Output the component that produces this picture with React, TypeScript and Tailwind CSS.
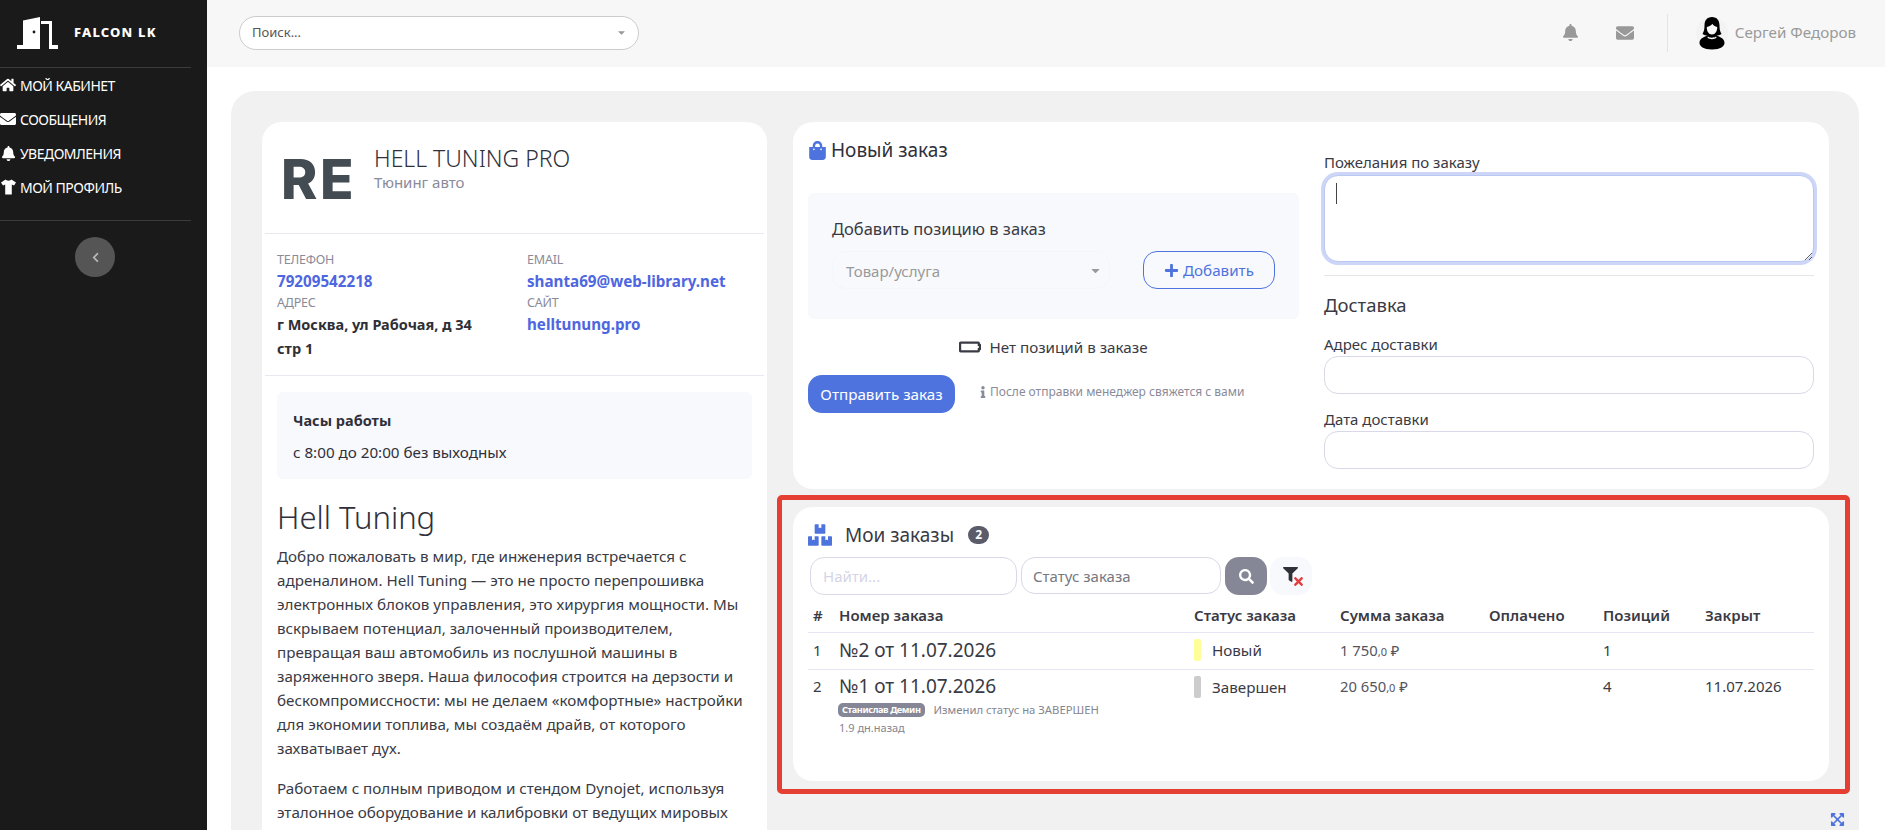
import React from "react";
import { FaHome, FaEnvelope, FaBell, FaChevronLeft, FaShoppingBag, FaPlus, FaInfo, FaSearch, FaBoxes, FaExpandArrowsAlt, FaFilter, FaTimes, FaBatteryEmpty, FaCaretDown } from "react-icons/fa";

function Logo() {
  return (
    <svg width="41" height="32" viewBox="0 0 41 32" className="ml-[17px] shrink-0">
      <path d="M6 3.5L23 0V32H0V28H6Z" fill="#fff" />
      <path d="M24 4H35V28H41V32H32V7H24Z" fill="#fff" />
      <circle cx="17" cy="15" r="1.4" fill="#1a1a1a" />
    </svg>
  );
}

function Shirt() {
  return (
    <svg width="15" height="16" viewBox="0 0 15 16" fill="#fff">
      <path d="M4.600 0.500L0 3.500L2 6.500L4.200 5.400V15.500H10.800V5.400L13 6.500L15 3.500L10.400 0.500C9.800 2 5.200 2 4.600 0.500Z" />
    </svg>
  );
}

function Avatar() {
  return (
    <svg width="32" height="34" viewBox="0 0 32 34" className="shrink-0">
      <circle cx="16" cy="17" r="16" fill="#f3f3f3" />
      <path d="M16 1c-5 0-7.500 3.500-7.500 8.500 0 3.500-.5 6-2 8.500 2 1 3.500 1.500 5 1.500-3 1.500-8 2.500-8 7.500 0 3 4 6.500 12.500 6.500s12.500-3.500 12.500-6.500c0-5-5-6-8-7.500 1.500 0 3-.5 5-1.500-1.500-2.500-2-5-2-8.500C23.500 4.500 21 1 16 1Z" fill="#000" />
      <path d="M10.800 11c2.500-.5 4.500-1.500 5.500-3.200 1 1.700 2.700 2.800 4.900 3.200.2 4-2 7.500-5.200 7.500s-5.500-3.500-5.200-7.500Z" fill="#f7f7f7" />
      <path d="M12 20.500c1.500 1.600 6.500 1.600 8 0l.6 1c-2 2.200-7.200 2.200-9.200 0Z" fill="#f7f7f7" />
    </svg>
  );
}

const navItems = [
  { icon: <FaHome size={16} />, label: "Мой кабинет" },
  { icon: <FaEnvelope size={16} />, label: "Сообщения" },
  { icon: <FaBell size={15} />, label: "Уведомления" },
  { icon: <Shirt />, label: "Мой профиль" },
];

function Sidebar() {
  return (
    <aside className="w-[207px] shrink-0 bg-[#1a1a1a] text-white">
      <div className="w-[191px]">
        <div className="flex h-[68px] items-center border-b border-[#3b3b3b] pb-[2px]">
          <Logo />
          <span className="ml-[16px] text-[13px] font-extrabold tracking-[1.2px]">FALCON LK</span>
        </div>
        <nav className="flex flex-col border-b border-[#3b3b3b] pb-[16px]">
          {navItems.map((n) => (
            <a key={n.label} className="flex h-[34px] items-center gap-[4px] text-[14px] uppercase tracking-[-0.5px]">
              <span className="flex w-[16px] justify-center">{n.icon}</span>
              {n.label}
            </a>
          ))}
        </nav>
        <button className="ml-[75px] mt-[16px] flex h-[40px] w-[40px] items-center justify-center rounded-full bg-[#555555] text-[#b8b8b8]">
          <FaChevronLeft size={11} />
        </button>
      </div>
    </aside>
  );
}

function Header() {
  return (
    <header className="flex h-[67px] shrink-0 items-center bg-[#f7f7f7] pb-[2px] pl-[32px]">
      <div className="flex h-[34px] w-[400px] items-center justify-between rounded-[17px] border border-[#cccccc] bg-white pl-[12px] pr-[11px] text-[13px] text-[#555555]">
        <span>Поиск...</span>
        <FaCaretDown size={11} className="text-[#999999]" />
      </div>
      <div className="ml-auto flex items-center pr-[29px] text-[#999999]">
        <FaBell size={17} />
        <FaEnvelope size={18} className="ml-[37px]" />
        <div className="ml-[33px] mr-[28px] h-[38px] w-px bg-[#e4e4e4]" />
        <Avatar />
        <span className="ml-[7px] text-[15.200px] text-[#9a9a9a]">Сергей Федоров</span>
      </div>
    </header>
  );
}

function Contact({ label, value, link }: { label: string; value: React.ReactNode; link?: boolean }) {
  return (
    <div>
      <div className="h-[19px] text-[12.500px] uppercase leading-[20px] tracking-[-0.2px] text-[#8a8a99]">{label}</div>
      <div className={`font-bold leading-[24px] ${link ? "text-[15.200px] text-[#4e66df]" : "text-[14.500px] text-[#2f2f36]"}`}>{value}</div>
    </div>
  );
}

function LeftCard() {
  return (
    <section className="h-[720px] w-[505px] shrink-0 overflow-hidden rounded-t-[20px] bg-white px-[3px] pt-[21px]">
      <div className="flex h-[90px] items-start pl-[16px]">
        <div className="mt-[6px] w-[93px] text-[55px] font-extrabold leading-[60px] tracking-[2.500px] text-[#434c52]" style={{ fontFamily: "Inter, sans-serif" }}>RE</div>
        <div>
          <div className="text-[23px] font-light leading-[30px] text-[#30303a]">HELL TUNING PRO</div>
          <div className="text-[15px] leading-[19px] text-[#8a8a99]">Тюнинг авто</div>
        </div>
      </div>
      <div className="border-y border-[#e8e8f2] px-[12px] pb-[15px] pt-[16px]">
        <div className="grid grid-cols-[250px_1fr]">
          <Contact label="Телефон" value="79209542218" link />
          <Contact label="Email" value="shanta69@web-library.net" link />
          <div className="w-[215px]"><Contact label="Адрес" value="г Москва, ул Рабочая, д 34 стр 1" /></div>
          <Contact label="Сайт" value="helltunung.pro" link />
        </div>
      </div>
      <div className="px-[12px]">
        <div className="mt-[16px] h-[87px] rounded-[6px] bg-[#f8f9fc] px-[16px] pt-[16px] text-[#30303a]">
          <div className="text-[14.500px] font-bold leading-[24px]">Часы работы</div>
          <div className="mt-[8px] text-[15.200px] leading-[24px]">с 8:00 до 20:00 без выходных</div>
        </div>
        <h1 className="mt-[18px] text-[31px] font-light leading-[40px] text-[#30303a]">Hell Tuning</h1>
        <p className="mt-[7px] text-[15.200px] leading-[24px] text-[#3a3a44]">
          Добро пожаловать в мир, где инженерия встречается с адреналином. Hell Tuning — это не просто перепрошивка электронных блоков управления, это хирургия мощности. Мы вскрываем потенциал, залоченный производителем, превращая ваш автомобиль из послушной машины в заряженного зверя. Наша философия строится на дерзости и бескомпромиссности: мы не делаем «комфортные» настройки для экономии топлива, мы создаём драйв, от которого захватывает дух.
        </p>
        <p className="mt-[16px] text-[15.200px] leading-[24px] text-[#3a3a44]">
          Работаем с полным приводом и стендом Dynojet, используя эталонное оборудование и калибровки от ведущих мировых
        </p>
      </div>
    </section>
  );
}

function NewOrder() {
  return (
    <section className="flex h-[367px] gap-[25px] rounded-[20px] bg-white px-[15px]">
      <div className="w-[491px] shrink-0 pt-[16px]">
        <div className="flex h-[24px] items-center gap-[4px] text-[19px] text-[#30303a]">
          <FaShoppingBag size={19} className="text-[#4e73df]" />
          Новый заказ
        </div>
        <div className="mt-[31px] h-[126px] rounded-[6px] bg-[#f8f9fc] px-[24px] pt-[24px]">
          <div className="text-[16.500px] leading-[24px] text-[#3a3a44]">Добавить позицию в заказ</div>
          <div className="mt-[10px] flex items-center justify-between">
            <div className="flex h-[38px] w-[278px] items-center justify-between rounded-[14px] border border-[#f5f6fb] pl-[13px] pr-[7px] text-[15px] text-[#999999]">
              <span className="mt-[2px]">Товар/услуга</span>
              <FaCaretDown size={13} />
            </div>
            <button className="flex h-[38px] w-[132px] items-center justify-center gap-[4px] rounded-[14px] border border-[#4e73df] text-[15.200px] text-[#4e73df]">
              <FaPlus size={15} />
              Добавить
            </button>
          </div>
        </div>
        <div className="mt-[16px] flex h-[24px] items-center justify-center gap-[8px] text-[15.200px] text-[#3a3a44]">
          <FaBatteryEmpty size={22} />
          Нет позиций в заказе
        </div>
        <div className="mt-[16px] flex items-center">
          <button className="h-[38px] w-[147px] rounded-[14px] bg-[#4e73df] text-[15.200px] text-white">Отправить заказ</button>
          <span className="-mt-[4px] ml-[22px] flex items-center gap-[1px] text-[12px] text-[#8a8a99]">
            <FaInfo size={12} />
            После отправки менеджер свяжется с вами
          </span>
        </div>
      </div>
      <div className="min-w-0 flex-1 pt-[30px] text-[15px] text-[#3a3a44]">
        <label className="block leading-[20px]">Пожелания по заказу</label>
        <div className="relative mt-[3px] h-[87px]">
          <textarea className="h-full w-full rounded-[14px] border border-[#bac8f3] bg-white shadow-[0_0_0_3px_#cdd6f6] outline-none" />
          <span className="absolute left-[12px] top-[8px] h-[21px] w-px bg-[#444444]" />
        </div>
        <div className="mt-[13px] border-t border-[#e6e6e6]" />
        <div className="mt-[15px] text-[18.500px] leading-[28px] text-[#3a3a44]">Доставка</div>
        <label className="mt-[15px] block leading-[20px]">Адрес доставки</label>
        <input className="mt-[2px] block h-[38px] w-full rounded-[14px] border border-[#d8d8e8] bg-white outline-none" />
        <label className="mt-[15px] block leading-[20px]">Дата доставки</label>
        <input className="mt-[2px] block h-[38px] w-full rounded-[14px] border border-[#d8d8e8] bg-white outline-none" />
      </div>
    </section>
  );
}

function StatusCell({ color, text }: { color: string; text: string }) {
  return (
    <div className="flex items-center gap-[11px] text-[15.200px]">
      <span className={`h-[22px] w-[7px] rounded-[2px] ${color}`} />
      {text}
    </div>
  );
}

function Money({ whole }: { whole: string }) {
  return (
    <span className="text-[14.800px] text-[#555560]">
      {whole}
      <span className="text-[11px]">,0</span> ₽
    </span>
  );
}

function MyOrders() {
  return (
    <section className="relative mt-[18px]">
      <div className="pointer-events-none absolute -bottom-[13px] -left-[16px] -right-[21px] -top-[12px] rounded-[5px] border-[5px] border-[#e53e33]" />
      <div className="h-[274px] rounded-[20px] bg-white px-[15px] pt-[14px]">
        <div className="flex h-[28px] items-center text-[19px] text-[#3a3a44]">
          <FaBoxes size={24} className="text-[#4e73df]" />
          <span className="ml-[13px]">Мои заказы</span>
          <span className="ml-[14px] flex h-[18px] w-[21px] items-center justify-center rounded-full bg-[#5a5c69] text-[12px] font-bold text-white">2</span>
        </div>
        <div className="mt-[8px] flex pl-[2px]">
          <input placeholder="Найти..." className="h-[38px] w-[207px] rounded-[14px] border border-[#d8d8e8] bg-white pl-[12px] text-[15px] outline-none placeholder:text-[#d5d5e5]" />
          <input readOnly value="Статус заказа" className="ml-[4px] h-[37px] w-[200px] rounded-[14px] border border-[#d8d8e8] bg-white pl-[11px] text-[15px] text-[#777780] outline-none" />
          <button className="ml-[4px] flex h-[38px] w-[42px] items-center justify-center rounded-[14px] bg-[#858796] text-white">
            <FaSearch size={15} />
          </button>
          <button className="relative ml-[3px] flex h-[38px] w-[42px] items-center justify-center rounded-[14px] bg-[#f8f9fc] text-[#30303a]">
            <FaFilter size={15} className="-ml-[2px] -mt-[4px]" />
            <FaTimes size={13} className="absolute bottom-[7px] right-[7px] text-[#e53e3e]" />
          </button>
        </div>
        <table className="mt-[4px] w-full table-fixed border-collapse text-[15px] text-[#3a3a44]">
          <colgroup>
            <col className="w-[31px]" />
            <col className="w-[355px]" />
            <col className="w-[146px]" />
            <col className="w-[149px]" />
            <col className="w-[114px]" />
            <col className="w-[102px]" />
            <col />
          </colgroup>
          <thead>
            <tr className="h-[33px] border-b border-[#e6e6f2] text-left">
              <th className="pl-[5px] font-semibold">#</th>
              <th className="font-semibold">Номер заказа</th>
              <th className="font-semibold">Статус заказа</th>
              <th className="font-semibold">Сумма заказа</th>
              <th className="font-semibold">Оплачено</th>
              <th className="font-semibold">Позиций</th>
              <th className="font-semibold">Закрыт</th>
            </tr>
          </thead>
          <tbody>
            <tr className="h-[37px] border-b border-[#e6e6f2]">
              <td className="pl-[5px]">1</td>
              <td className="text-[19px]">№2 от 11.07.2026</td>
              <td><StatusCell color="bg-[#ffff99]" text="Новый" /></td>
              <td><Money whole="1 750" /></td>
              <td />
              <td>1</td>
              <td />
            </tr>
            <tr className="align-top">
              <td className="pl-[5px] pt-[5px]">2</td>
              <td className="pt-[3px]">
                <div className="text-[19px] leading-[26px]">№1 от 11.07.2026</div>
                <div className="mt-[3px] flex items-center text-[11.300px] leading-[16px] text-[#858590]">
                  <span className="-ml-px rounded-[5px] bg-[#858796] px-[4px] text-[9.200px] font-bold leading-[14px] tracking-[-0.4px] text-white">Станислав Демин</span>
                  <span className="ml-[9px]">Изменил статус на ЗАВЕРШЕН</span>
                </div>
                <div className="mt-[2px] text-[11px] leading-[16px] text-[#858590]">1.9 дн.назад</div>
              </td>
              <td className="pt-[6px]"><StatusCell color="bg-[#cccccc]" text="Завершен" /></td>
              <td className="pt-[5px]"><Money whole="20 650" /></td>
              <td />
              <td className="pt-[5px]">4</td>
              <td className="pt-[5px]">11.07.2026</td>
            </tr>
          </tbody>
        </table>
      </div>
    </section>
  );
}

export default function App() {
  return (
    <div className="flex h-[830px] w-[1885px] overflow-hidden bg-white" style={{ fontFamily: '"Noto Sans", sans-serif' }}>
      <Sidebar />
      <div className="flex min-w-0 flex-1 flex-col">
        <Header />
        <main className="ml-[24px] mr-[26px] mt-[24px] flex min-h-0 flex-1 gap-[26px] rounded-t-[24px] bg-[#f1f1f1] pl-[31px] pr-[30px] pt-[31px]">
          <LeftCard />
          <div className="min-w-0 flex-1">
            <NewOrder />
            <MyOrders />
            <div className="-mr-[16px] mt-[31px] flex justify-end text-[#4e73df]">
              <FaExpandArrowsAlt size={15} />
            </div>
          </div>
        </main>
      </div>
    </div>
  );
}
